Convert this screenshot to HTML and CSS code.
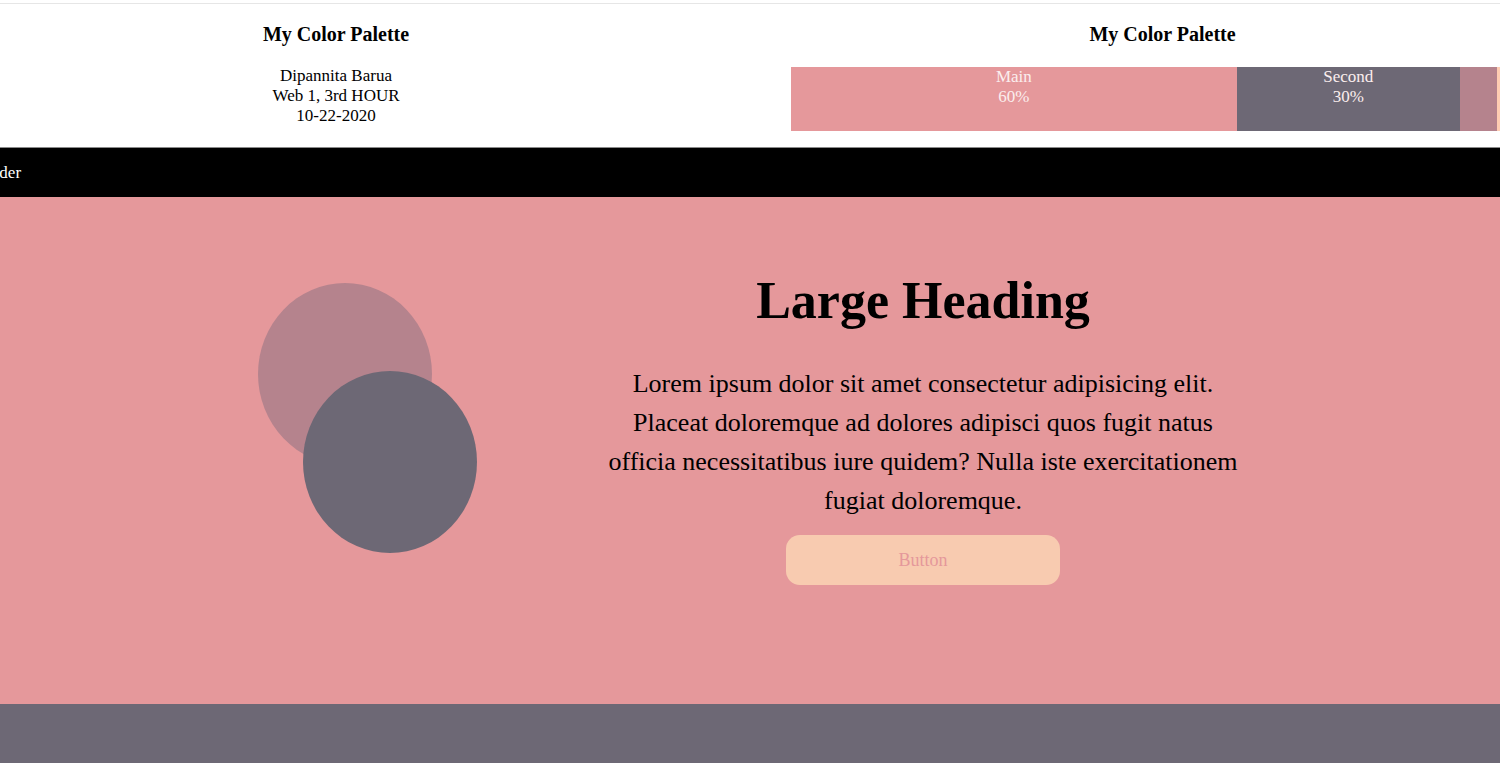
FILE: index.html
```html
<!DOCTYPE html>
<html lang="en">
<head>
<meta charset="utf-8">
<title>My Color Palette</title>
<link rel="stylesheet" href="styles.css">
</head>
<body>
<div class="page">
  <header class="palette-header">
    <div class="col col-info">
      <h2 class="col-title">My Color Palette</h2>
      <p class="info">Dipannita Barua<br>Web 1, 3rd HOUR<br>10-22-2020</p>
    </div>
    <div class="col col-palette">
      <h2 class="col-title">My Color Palette</h2>
      <div class="bars">
        <div class="bar bar-main" style="width:60%">Main<br>60%</div>
        <div class="bar bar-second" style="width:30%">Second<br>30%</div>
        <div class="bar bar-third" style="width:5%"></div>
        <div class="bar bar-fourth" style="width:5%"></div>
      </div>
    </div>
  </header>
  <nav class="nav"><span class="nav-label">Header</span></nav>
  <section class="hero">
    <div class="circles">
      <div class="circle circle-one"></div>
      <div class="circle circle-two"></div>
    </div>
    <div class="hero-text">
      <h1 class="hero-title">Large Heading</h1>
      <p class="hero-copy">Lorem ipsum dolor sit amet consectetur adipisicing elit. Placeat doloremque ad dolores adipisci quos fugit natus officia necessitatibus iure quidem? Nulla iste exercitationem fugiat doloremque.</p>
      <button class="btn" type="button">Button</button>
    </div>
  </section>
  <footer class="footer"></footer>
</div>
</body>
</html>
```

FILE: styles.css
```css
html, body {
  margin: 0;
  padding: 0;
  background: #ffffff;
}

body {
  font-family: "Liberation Serif", "Times New Roman", serif;
  color: #000;
  width: 1500px;
  height: 763px;
  overflow: hidden;
}

.page {
  padding-top: 3px;
  display: flex;
  flex-direction: column;
  height: 760px;
}

.palette-header {
  border-top: 1px solid #e6e6e6;
  display: flex;
  gap: 119px;
  height: 143px;
  flex-shrink: 0;
}

.col {
  flex-shrink: 0;
  text-align: center;
}

.col-info {
  width: 672px;
}

.col-palette {
  width: 743px;
}

.col-title {
  font-size: 20px;
  font-weight: bold;
  line-height: 23px;
  margin: 19px 0 0;
}

.info {
  margin: 20px 0 0;
  font-size: 17px;
  line-height: 20px;
}

.bars {
  display: flex;
  margin-top: 21px;
  height: 64px;
}

.bar {
  font-size: 17px;
  line-height: 20px;
  color: #fbeeee;
  text-align: center;
  flex-shrink: 0;
}

.bar-main { background: #e5989b; }
.bar-second { background: #6d6875; }
.bar-third { background: #b5838d; }
.bar-fourth { background: #ffcdb2; }

.nav {
  background: #000;
  border-top: 1px solid #8a8a8a;
  height: 49px;
  flex-shrink: 0;
  display: flex;
  align-items: center;
  overflow: hidden;
}

.nav-label {
  color: #fff;
  font-size: 17px;
  margin-left: -28px;
  white-space: nowrap;
}

.hero {
  background: #e5989b;
  height: 507px;
  flex-shrink: 0;
  display: flex;
  align-items: flex-start;
  padding-left: 258px;
  box-sizing: border-box;
}

.circles {
  width: 219px;
  margin-top: 86px;
  flex-shrink: 0;
}

.circle {
  width: 174px;
  height: 182px;
  border-radius: 50%;
}

.circle-one {
  background: #b5838d;
}

.circle-two {
  background: #6d6875;
  margin-top: -94px;
  margin-left: 45px;
}

.hero-text {
  width: 640px;
  margin-left: 126px;
  margin-top: 74px;
  text-align: center;
  display: flex;
  flex-direction: column;
  align-items: center;
}

.hero-title {
  font-size: 52px;
  font-weight: bold;
  line-height: 60px;
  margin: 0;
}

.hero-copy {
  font-size: 26px;
  line-height: 39px;
  margin: 33px 0 0;
}

.btn {
  margin-top: 15px;
  width: 274px;
  height: 50px;
  border: none;
  border-radius: 14px;
  background: #f8cbb0;
  color: #e5989b;
  font-family: "Liberation Serif", "Times New Roman", serif;
  font-size: 18px;
  cursor: pointer;
}

.footer {
  background: #6d6875;
  flex: 1;
}
```
